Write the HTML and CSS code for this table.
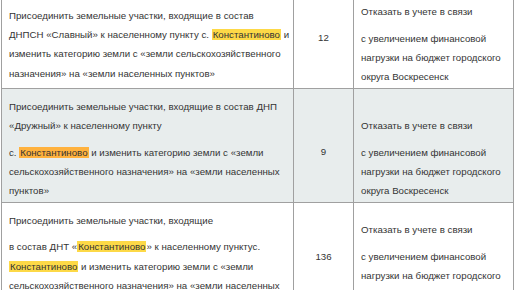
FILE: index.html
```html
<!DOCTYPE html>
<html lang="ru">
<head>
<meta charset="utf-8">
<title>Таблица</title>
<link rel="stylesheet" href="styles.css">
</head>
<body>
<table class="grid">
  <colgroup>
    <col class="col-text">
    <col class="col-num">
    <col class="col-decision">
  </colgroup>
  <tbody>
    <tr>
      <td class="cell"><p>Присоединить земельные участки, входящие в состав<br>ДНПСН «Славный» к населенному пункту с. <mark class="hl">Константиново</mark> и изменить категорию земли с «земли сельскохозяйственного назначения» на «земли населенных пунктов»</p></td>
      <td class="cell cell-num cell-num-high"><p>12</p></td>
      <td class="cell"><p>Отказать в учете в связи</p><p>с увеличением финансовой нагрузки на бюджет городского округа Воскресенск</p></td>
    </tr>
    <tr class="row-alt">
      <td class="cell"><p>Присоединить земельные участки, входящие в состав ДНП «Дружный» к населенному пункту</p><p>с. <mark class="hl hl-current">Константиново</mark> и изменить категорию земли с «земли сельскохозяйственного назначения» на «земли населенных пунктов»</p></td>
      <td class="cell cell-num cell-num-low"><p>9</p></td>
      <td class="cell cell-low"><p>Отказать в учете в связи</p><p>с увеличением финансовой нагрузки на бюджет городского округа Воскресенск</p></td>
    </tr>
    <tr>
      <td class="cell"><p>Присоединить земельные участки, входящие</p><p>в состав ДНТ «<mark class="hl">Константиново</mark>» к населенному пунктус. <mark class="hl">Константиново</mark> и изменить категорию земли с «земли сельскохозяйственного назначения» на «земли населенных пунктов»</p></td>
      <td class="cell cell-num cell-num-high"><p>136</p></td>
      <td class="cell"><p>Отказать в учете в связи</p><p>с увеличением финансовой нагрузки на бюджет городского округа Воскресенск</p></td>
    </tr>
  </tbody>
</table>
</body>
</html>
```
FILE: styles.css
```css
html, body {
  margin: 0;
  padding: 0;
  background: #ffffff;
}

body {
  font-family: "Liberation Sans", Arial, sans-serif;
  font-size: 9.7px;
  line-height: 19.3px;
  color: #343434;
  overflow: hidden;
}

.grid {
  border-collapse: collapse;
  table-layout: fixed;
  width: 512px;
  margin: -7px 0 0 1px;
}

.col-text { width: 292px; }
.col-num { width: 60px; }
.col-decision { width: 160px; }

.cell {
  border: 1px solid #a0a0a0;
  padding: 8px 0 1px 7px;
  vertical-align: middle;
  text-align: left;
}

.cell p {
  margin: 0;
}

.cell p + p {
  margin-top: 7.5px;
}

.cell-num {
  text-align: center;
  padding-left: 0;
  padding-right: 0;
}

.cell-num-low {
  padding-top: 14px;
}

.cell-num-high {
  padding-bottom: 14px;
}

.cell-low {
  padding-top: 27px;
}

.row-alt {
  background: #e8eded;
}

.hl {
  background: #fdd947;
  color: #343434;
  padding: 0 1px;
}

.hl-current {
  background: #ffb23e;
}
```
